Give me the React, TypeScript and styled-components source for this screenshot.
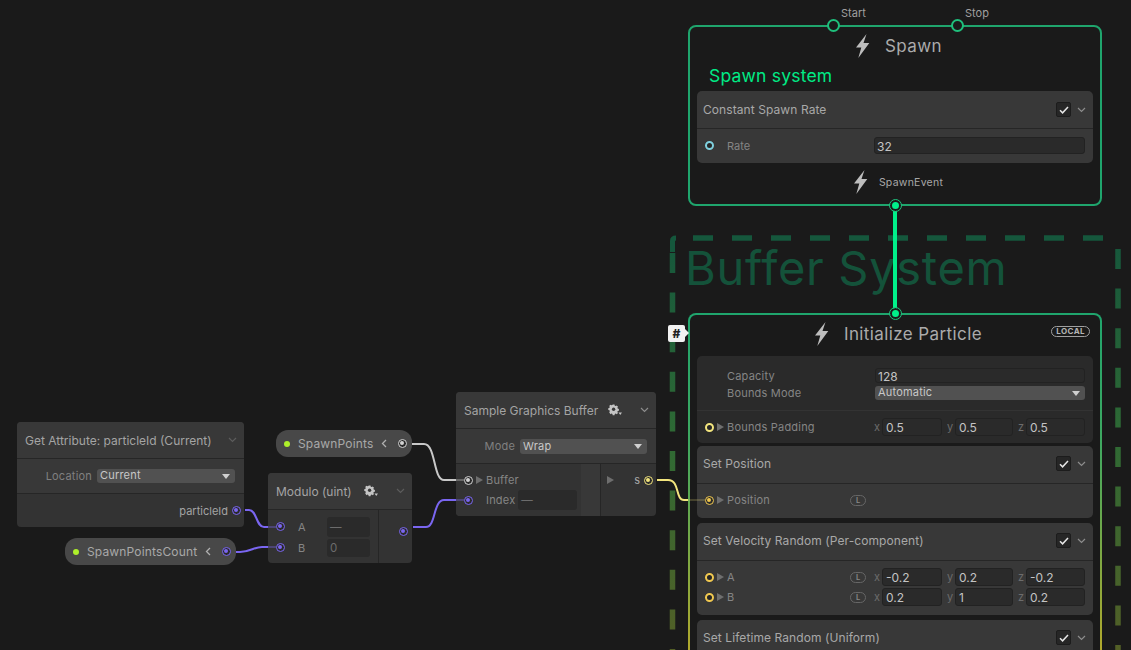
import styled, { createGlobalStyle } from "styled-components";

const GlobalStyle = createGlobalStyle`
    html, body {
        margin: 0;
        padding: 0;
        background: #1a1a1a;
    }
    body {
        font-family: "Inter", "Liberation Sans", sans-serif;
        font-size: 11px;
        color: #a6a6a6;
    }
`;

const PURPLE = "#7a66f0";
const WHITE = "#d2d2d2";
const YELLOW = "#f3e57e";
const ORANGE = "#f0c850";
const CYAN = "#7fd0de";

function Bolt() {
    return (
        <BoltSvg viewBox="0 0 14 24">
            <path d="M11 0 L0.5 13.5 L5.8 13.5 L2.8 24 L13.8 9 L8 9 Z" fill="#bdbdbd" />
        </BoltSvg>
    );
}

function Gear({ gap }: { gap: number }) {
    return (
        <GearBox $gap={gap}>
            <svg width="14" height="12" viewBox="0 0 14 12">
                <path
                    d="M4 0.5h2l.3 1.3 1 .4 1.1-.7 1.4 1.4-.7 1.1.4 1 1.3.3v2l-1.3.3-.4 1 .7 1.1-1.4 1.4-1.1-.7-1 .4-.3 1.3H4l-.3-1.3-1-.4-1.1.7L.2 8.9l.7-1.1-.4-1L-.8 6.500V4.500l1.300-.3.4-1-.7-1.100 1.400-1.400 1.100.7 1-.4Z"
                    fill="#c4c4c4"
                    transform="translate(1 0) scale(.92)"
                />
                <circle cx="5.600" cy="5.300" r="1.700" fill="#383838" />
                <path d="M10.500 8.500h3.500l-1.750 2.500Z" fill="#c4c4c4" />
            </svg>
        </GearBox>
    );
}

function Chevron({ dim }: { dim?: boolean }) {
    return (
        <svg width="9" height="6" viewBox="0 0 9 6">
            <path d="M1 1 L4.500 4.500 L8 1" fill="none" stroke={dim ? "#5c5c5c" : "#8c8c8c"} strokeWidth="1.200" />
        </svg>
    );
}

function Check() {
    return (
        <CheckBox>
            <svg width="10" height="8" viewBox="0 0 10 8">
                <path d="M1 4.200 L3.600 6.800 L9 1" fill="none" stroke="#e6e6e6" strokeWidth="1.500" />
            </svg>
        </CheckBox>
    );
}

function BlockHeader({ title, tall }: { title: string; tall?: boolean }) {
    return (
        <BlockHead $tall={tall}>
            <span>{title}</span>
            <HeadTools>
                <Check />
                <Chevron />
            </HeadTools>
        </BlockHead>
    );
}

function Vector({ x, y, z }: { x: string; y: string; z: string }) {
    return (
        <VectorRow>
            <Axis>x</Axis>
            <VectorInput $w={60}>{x}</VectorInput>
            <Axis $gap>y</Axis>
            <VectorInput $w={58}>{y}</VectorInput>
            <Axis $gap>z</Axis>
            <VectorInput $w={59}>{z}</VectorInput>
        </VectorRow>
    );
}

function ParamLabel({ color, linked, text }: { color: string; linked?: boolean; text: string }) {
    return (
        <ParamLeft>
            <Port $color={color} $linked={linked} />
            <Arrow />
            <ParamText>{text}</ParamText>
        </ParamLeft>
    );
}

function ParameterPill({ x, y, w, name, color }: { x: number; y: number; w: number; name: string; color: string }) {
    return (
        <Pill $x={x} $y={y} $w={w}>
            <Dot />
            <PillName>{name}</PillName>
            <PillArrow width="6" height="9" viewBox="0 0 6 9">
                <path d="M5 1 L1.500 4.500 L5 8" fill="none" stroke="#b0b0b0" strokeWidth="1.300" />
            </PillArrow>
            <Port $color={color} $linked />
        </Pill>
    );
}

export default function App() {
    return (
        <Canvas>
            <GlobalStyle />

            <Backdrop viewBox="0 0 1131 650" width="1131" height="650">
                <defs>
                    <linearGradient id="frame" gradientUnits="userSpaceOnUse" x1="0" y1="236" x2="0" y2="650">
                        <stop offset="0" stopColor="#15573c" />
                        <stop offset="0.5" stopColor="#2f6a34" />
                        <stop offset="1" stopColor="#535f26" />
                    </linearGradient>
                </defs>
                <path d="M672.500 252 V241 Q672.500 238 676 238" fill="none" stroke="#15573c" strokeWidth="5" />
                <line x1="693" y1="238" x2="1110" y2="238" stroke="#15573c" strokeWidth="5.500" strokeDasharray="20 19" />
                <line x1="672.500" y1="253" x2="672.500" y2="650" stroke="url(#frame)" strokeWidth="5.500" strokeDasharray="20 19.600" />
                <line x1="1118" y1="249" x2="1118" y2="650" stroke="url(#frame)" strokeWidth="5.500" strokeDasharray="20 19.600" />
            </Backdrop>

            <GroupTitle>Buffer System</GroupTitle>

            <NodeFrame>
                <TopPort $left={137}><PortLabel>Start</PortLabel></TopPort>
                <TopPort $left={261}><PortLabel>Stop</PortLabel></TopPort>
                <ContextHead>
                    <Bolt />
                    <ContextTitle>Spawn</ContextTitle>
                </ContextHead>
                <ContextLabel>Spawn system</ContextLabel>
                <Block>
                    <BlockHeader title="Constant Spawn Rate" tall />
                    <SpawnRow>
                        <SmallPort $color={CYAN} />
                        <SpawnLabel>Rate</SpawnLabel>
                        <ValueInput>32</ValueInput>
                    </SpawnRow>
                </Block>
                <EventRow>
                    <Bolt />
                    <span>SpawnEvent</span>
                </EventRow>
                <FlowPort $top={173} $left={200} />
            </NodeFrame>

            <InitFrame>
                <InitInner>
                    <InitHead>
                        <Bolt />
                        <ContextTitle>Initialize Particle</ContextTitle>
                        <LocalBadge>LOCAL</LocalBadge>
                    </InitHead>
                    <DarkBlock>
                        <SettingRows>
                            <SettingRow>
                                <SettingLabel>Capacity</SettingLabel>
                                <CapacityInput>128</CapacityInput>
                            </SettingRow>
                            <SettingRow>
                                <SettingLabel>Bounds Mode</SettingLabel>
                                <Select $w={210} $h={14}>Automatic</Select>
                            </SettingRow>
                        </SettingRows>
                        <ParamRow $h={32}>
                            <ParamLabel color={YELLOW} text="Bounds Padding" />
                            <Vector x="0.5" y="0.5" z="0.5" />
                        </ParamRow>
                    </DarkBlock>
                    <Block>
                        <BlockHeader title="Set Position" />
                        <ParamRow $h={32} $pad={2}>
                            <ParamLabel color={ORANGE} linked text="Position" />
                            <SpaceBadge>L</SpaceBadge>
                        </ParamRow>
                    </Block>
                    <Block $gap={5}>
                        <BlockHeader title="Set Velocity Random (Per-component)" />
                        <VelocityRows>
                            <ParamRow $h={20}>
                                <ParamLabel color={ORANGE} text="A" />
                                <SpaceBadge>L</SpaceBadge>
                                <Vector x="-0.2" y="0.2" z="-0.2" />
                            </ParamRow>
                            <ParamRow $h={20}>
                                <ParamLabel color={ORANGE} text="B" />
                                <SpaceBadge>L</SpaceBadge>
                                <Vector x="0.2" y="1" z="0.2" />
                            </ParamRow>
                        </VelocityRows>
                    </Block>
                    <Block $gap={5}>
                        <BlockHeader title="Set Lifetime Random (Uniform)" />
                    </Block>
                </InitInner>
                <FlowPort $top={-5} $left={202} />
            </InitFrame>

            <SystemTag>#</SystemTag>

            <Operator $x={17} $y={422} $w={227}>
                <OperatorHead>
                    <span>Get Attribute: particleId (Current)</span>
                    <HeadEnd><Chevron dim /></HeadEnd>
                </OperatorHead>
                <ModeRow>
                    <ModeLabel>Location</ModeLabel>
                    <Select $w={138} $h={14}>Current</Select>
                </ModeRow>
                <OutputRow>
                    <span>particleId</span>
                    <Port $color={PURPLE} $linked />
                </OutputRow>
            </Operator>

            <ParameterPill x={276} y={430} w={136} name="SpawnPoints" color={WHITE} />
            <ParameterPill x={65} y={538} w={171} name="SpawnPointsCount" color={PURPLE} />

            <Operator $x={268} $y={473} $w={144}>
                <OperatorHead>
                    <span>Modulo (uint)</span>
                    <Gear gap={12} />
                    <HeadEnd><Chevron dim /></HeadEnd>
                </OperatorHead>
                <SplitBody>
                    <InputsColumn>
                        <InputLine>
                            <Port $color={PURPLE} $linked />
                            <InputName>A</InputName>
                            <DarkField>—</DarkField>
                        </InputLine>
                        <InputLine>
                            <Port $color={PURPLE} $linked />
                            <InputName>B</InputName>
                            <DarkField $short>0</DarkField>
                        </InputLine>
                    </InputsColumn>
                    <OutputsColumn $w={34}>
                        <Port $color={PURPLE} $linked />
                    </OutputsColumn>
                </SplitBody>
            </Operator>

            <Operator $x={456} $y={392} $w={200}>
                <OperatorHead>
                    <span>Sample Graphics Buffer</span>
                    <Gear gap={10} />
                    <HeadEnd><Chevron /></HeadEnd>
                </OperatorHead>
                <ModeRow>
                    <ModeLabel>Mode</ModeLabel>
                    <Select $w={127} $h={15}>Wrap</Select>
                </ModeRow>
                <SplitBody $h={52}>
                    <SampleInputs>
                        <SampleLine>
                            <Port $color={WHITE} $linked />
                            <Arrow />
                            <SampleName>Buffer</SampleName>
                        </SampleLine>
                        <SampleLine>
                            <Port $color={PURPLE} $linked />
                            <ArrowGap />
                            <SampleName>Index</SampleName>
                            <IndexField>—</IndexField>
                        </SampleLine>
                    </SampleInputs>
                    <SampleOutput>
                        <Arrow />
                        <OutName>s</OutName>
                        <Port $color={YELLOW} $linked />
                    </SampleOutput>
                </SplitBody>
            </Operator>

            <Wires viewBox="0 0 1131 650" width="1131" height="650">
                <path d="M245 510 H249 C257 510 256 527 264 527 H268" stroke={PURPLE} />
                <path d="M268 527 H276 M268 547 H276 M456 500 H464" stroke={PURPLE} strokeOpacity=".35" />
                <path d="M456 480 H464" stroke="#c8c8c8" strokeOpacity=".35" />
                <path d="M688 500 H705" stroke={YELLOW} strokeOpacity=".2" />
                <path d="M236 552 H240 C250 552 254 547 262 547 H268" stroke={PURPLE} />
                <path d="M413 527 H426 C436 527 433 500 444 500 H456" stroke={PURPLE} />
                <path d="M412 444 H424 C436 444 433 480 444 480 H456" stroke="#c8c8c8" />
                <path d="M657 480 H668 C680 480 675 500 684 500 H688" stroke={YELLOW} />
                <line x1="895" y1="207" x2="895" y2="311" stroke="#00f08a" strokeWidth="4" />
            </Wires>
        </Canvas>
    );
}

const Canvas = styled.div`
    position: relative;
    width: 1131px;
    height: 650px;
    overflow: hidden;
    background: #1a1a1a;
`;

const Backdrop = styled.svg`
    position: absolute;
    left: 0;
    top: 0;
`;

const Wires = styled.svg`
    position: absolute;
    left: 0;
    top: 0;
    pointer-events: none;
    path {
        fill: none;
        stroke-width: 2;
    }
`;

const GroupTitle = styled.div`
    position: absolute;
    left: 685px;
    top: 240px;
    font-size: 47px;
    line-height: 56px;
    letter-spacing: 0.7px;
    color: #14523a;
    white-space: nowrap;
`;

const BoltSvg = styled.svg`
    width: 15px;
    height: 24px;
    flex: none;
`;

const NodeFrame = styled.div`
    position: absolute;
    left: 688px;
    top: 25px;
    width: 414px;
    height: 181px;
    box-sizing: border-box;
    border: 2px solid #1fa56d;
    border-radius: 8px;
    padding: 0 7px;
    background: #1a1a1a;
`;

const TopPort = styled.div<{ $left: number }>`
    position: absolute;
    top: -8px;
    left: ${(p) => p.$left}px;
    width: 9px;
    height: 9px;
    border: 2px solid #1fbf7c;
    border-radius: 50%;
    background: #1a1a1a;
`;

const PortLabel = styled.span`
    position: absolute;
    left: 12px;
    top: -15px;
    font-size: 11px;
    line-height: 14px;
    color: #a0a0a0;
`;

const FlowPort = styled.div<{ $top: number; $left: number }>`
    position: absolute;
    left: ${(p) => p.$left}px;
    top: ${(p) => p.$top}px;
    width: 7px;
    height: 7px;
    border: 2px solid #1a1a1a;
    outline: 1.500px solid #1fbf7c;
    border-radius: 50%;
    background: #00f08a;
    z-index: 2;
`;

const ContextHead = styled.div`
    display: flex;
    justify-content: center;
    align-items: center;
    gap: 15px;
    height: 38px;
    padding-left: 7px;
`;

const ContextTitle = styled.span`
    font-size: 17px;
    line-height: 20px;
    letter-spacing: 0.4px;
    color: #ababab;
`;

const ContextLabel = styled.div`
    margin: 0 0 0 12px;
    font-size: 17.500px;
    line-height: 22px;
    letter-spacing: 0.2px;
    color: #00ea85;
    height: 26px;
`;

const Block = styled.section<{ $gap?: number }>`
    margin-top: ${(p) => p.$gap ?? 0}px;
    background: #383838;
    border-radius: 5px;
    overflow: hidden;
`;

const DarkBlock = styled.section`
    background: #2a2a2a;
    border-radius: 5px;
    margin-bottom: 3px;
`;

const BlockHead = styled.header<{ $tall?: boolean }>`
    display: flex;
    align-items: center;
    justify-content: space-between;
    height: ${(p) => (p.$tall ? 37 : 35)}px;
    padding: 0 6px ${(p) => (p.$tall ? 0 : 2)}px;
    border-bottom: 1px solid #262626;
    font-size: 12px;
    letter-spacing: 0.08px;
    color: #a8a8a8;
`;

const HeadTools = styled.div`
    display: flex;
    align-items: center;
    gap: 6px;
    padding-right: 1px;
`;

const CheckBox = styled.div`
    display: flex;
    align-items: center;
    justify-content: center;
    width: 13px;
    height: 13px;
    background: #262626;
    border: 1px solid #1c1c1c;
    border-radius: 2px;
`;

const SpawnRow = styled.div`
    display: flex;
    align-items: center;
    height: 33px;
    padding: 0 8px 1px 8px;
`;

const SmallPort = styled.span<{ $color: string }>`
    width: 5px;
    height: 5px;
    border: 2px solid ${(p) => p.$color};
    border-radius: 50%;
    background: #262626;
`;

const SpawnLabel = styled.span`
    margin-left: 13px;
    font-size: 11px;
    color: #858585;
`;

const ValueInput = styled.div`
    margin-left: auto;
    width: 211px;
    height: 17px;
    box-sizing: border-box;
    padding-left: 2px;
    background: #2a2a2a;
    border: 1px solid #222;
    border-radius: 3px;
    font-size: 12px;
    line-height: 17px;
    color: #c4c4c4;
`;

const EventRow = styled.div`
    display: flex;
    align-items: center;
    justify-content: center;
    gap: 11px;
    height: 38px;
    padding: 0 0 0 6px;
    font-size: 10.500px;
    letter-spacing: 0.25px;
    color: #a8a8a8;
`;

const InitFrame = styled.div`
    position: absolute;
    left: 688px;
    top: 313px;
    width: 414px;
    height: 440px;
    box-sizing: border-box;
    padding: 2px;
    border-radius: 8px;
    background: linear-gradient(180deg, #1fa56d 0, #3fa860 130px, #b0a82c 337px);
`;

const InitInner = styled.div`
    height: 100%;
    box-sizing: border-box;
    padding: 0 7px;
    background: #1a1a1a;
    border-radius: 6px;
`;

const InitHead = styled.div`
    position: relative;
    display: flex;
    justify-content: center;
    align-items: center;
    gap: 15px;
    height: 37px;
    padding: 0 0 4px 6px;
`;

const LocalBadge = styled.span`
    position: absolute;
    right: 3px;
    top: 11px;
    height: 9px;
    padding: 0 4px;
    border: 1px solid #a0a0a0;
    border-radius: 6px;
    font-size: 8px;
    line-height: 9px;
    font-weight: 700;
    letter-spacing: 0.4px;
    color: #b4b4b4;
`;

const SystemTag = styled.div`
    position: absolute;
    left: 668px;
    top: 325px;
    width: 17px;
    height: 17px;
    background: #f2f2f2;
    border-radius: 2px;
    color: #222;
    font-size: 12px;
    font-weight: 800;
    line-height: 17px;
    text-align: center;
    &::after {
        content: "";
        position: absolute;
        left: 17px;
        top: 4px;
        border-left: 4px solid #f2f2f2;
        border-top: 4px solid transparent;
        border-bottom: 4px solid transparent;
    }
`;

const SettingRows = styled.div`
    display: flex;
    flex-direction: column;
    gap: 3px;
    padding: 12px 8px 10px 30px;
    border-bottom: 1px solid #333;
`;

const SettingRow = styled.div`
    display: flex;
    align-items: center;
    justify-content: space-between;
`;

const SettingLabel = styled.span`
    font-size: 11px;
    letter-spacing: 0.2px;
    color: #858585;
`;

const CapacityInput = styled(ValueInput)`
    width: 210px;
    height: 15px;
    line-height: 16px;
`;

const Select = styled.div<{ $w: number; $h: number }>`
    position: relative;
    width: ${(p) => p.$w}px;
    height: ${(p) => p.$h}px;
    box-sizing: border-box;
    padding-left: 3px;
    background: #515151;
    border-radius: 3px;
    font-size: 11px;
    line-height: ${(p) => p.$h - 1}px;
    letter-spacing: 0.2px;
    color: #c8c8c8;
    &::after {
        content: "";
        position: absolute;
        right: 5px;
        top: ${(p) => (p.$h - 5) / 2}px;
        border-top: 5px solid #d0d0d0;
        border-left: 4px solid transparent;
        border-right: 4px solid transparent;
    }
`;

const ParamRow = styled.div<{ $h: number; $pad?: number }>`
    position: relative;
    display: flex;
    align-items: center;
    height: ${(p) => p.$h}px;
    padding: 0 8px ${(p) => p.$pad ?? 0}px;
`;

const ParamLeft = styled.div`
    display: flex;
    align-items: center;
    width: 153px;
`;

const ParamText = styled.span`
    margin-left: 3px;
    font-size: 11px;
    letter-spacing: 0.2px;
    color: #858585;
`;

const Port = styled.span<{ $color: string; $linked?: boolean }>`
    position: relative;
    flex: none;
    box-sizing: border-box;
    width: 9px;
    height: 9px;
    border: ${(p) => (p.$linked ? 1.5 : 2)}px solid ${(p) => p.$color};
    border-radius: 50%;
    background: ${(p) => (p.$linked ? "#2a2a2a" : "#262626")};
    &::after {
        content: "";
        display: ${(p) => (p.$linked ? "block" : "none")};
        position: absolute;
        left: 1px;
        top: 1px;
        width: 4px;
        height: 4px;
        border-radius: 50%;
        background: ${(p) => p.$color};
    }
`;

const Arrow = styled.span`
    flex: none;
    margin-left: 3px;
    border-left: 7px solid #6e6e6e;
    border-top: 4px solid transparent;
    border-bottom: 4px solid transparent;
`;

const ArrowGap = styled.span`
    flex: none;
    width: 10px;
`;

const SpaceBadge = styled.span`
    position: absolute;
    left: 153px;
    width: 14px;
    height: 9px;
    border: 1px solid #666;
    border-radius: 6px;
    font-size: 7.500px;
    line-height: 9px;
    font-weight: 600;
    text-align: center;
    color: #888;
`;

const VectorRow = styled.div`
    display: flex;
    align-items: center;
    margin-left: auto;
    font-size: 11px;
`;

const Axis = styled.span<{ $gap?: boolean }>`
    width: 8px;
    margin-left: ${(p) => (p.$gap ? 5 : 0)}px;
    color: #6c6c6c;
    font-size: 11px;
`;

const VectorInput = styled.div<{ $w: number }>`
    width: ${(p) => p.$w}px;
    height: 18px;
    box-sizing: border-box;
    padding-left: 3px;
    background: #2a2a2a;
    border: 1px solid #222;
    border-radius: 3px;
    font-size: 12px;
    line-height: 18px;
    color: #c4c4c4;
`;

const VelocityRows = styled.div`
    padding: 6px 0 8px;
`;

const Operator = styled.div<{ $x: number; $y: number; $w: number }>`
    position: absolute;
    left: ${(p) => p.$x}px;
    top: ${(p) => p.$y}px;
    width: ${(p) => p.$w}px;
    background: #333;
    border-radius: 4px;
    overflow: hidden;
`;

const OperatorHead = styled.header`
    display: flex;
    align-items: center;
    height: 36px;
    padding: 0 8px;
    background: #383838;
    border-bottom: 1px solid #262626;
    font-size: 12px;
    color: #a4a4a4;
    white-space: nowrap;
`;

const GearBox = styled.span<{ $gap: number }>`
    display: flex;
    margin-left: ${(p) => p.$gap}px;
`;

const HeadEnd = styled.span`
    display: flex;
    margin-left: auto;
    margin-right: -1px;
`;

const ModeRow = styled.div`
    display: flex;
    align-items: center;
    justify-content: flex-end;
    gap: 5px;
    height: 34px;
    padding: 0 9px;
    background: #383838;
    border-bottom: 1px solid #262626;
`;

const ModeLabel = styled.span`
    font-size: 11px;
    letter-spacing: 0.2px;
    color: #808080;
`;

const OutputRow = styled.div`
    display: flex;
    align-items: center;
    justify-content: flex-end;
    gap: 4px;
    height: 33px;
    padding: 0 3px 0 0;
    font-size: 11px;
    color: #a4a4a4;
`;

const Pill = styled.div<{ $x: number; $y: number; $w: number }>`
    position: absolute;
    left: ${(p) => p.$x}px;
    top: ${(p) => p.$y}px;
    width: ${(p) => p.$w}px;
    height: 27px;
    box-sizing: border-box;
    display: flex;
    align-items: center;
    padding: 0 5px 0 8px;
    background: #484848;
    border-radius: 12px;
`;

const Dot = styled.span`
    flex: none;
    width: 6px;
    height: 6px;
    border-radius: 50%;
    background: #aef02a;
`;

const PillName = styled.span`
    margin-left: 8px;
    font-size: 12px;
    letter-spacing: 0.15px;
    color: #a8a8a8;
`;

const PillArrow = styled.svg`
    margin: 0 11px 0 auto;
`;

const SplitBody = styled.div<{ $h?: number }>`
    display: flex;
    height: ${(p) => p.$h ?? 53}px;
`;

const InputsColumn = styled.div`
    flex: 1;
    display: flex;
    flex-direction: column;
    justify-content: center;
    gap: 2px;
    padding: 0 0 0 8px;
`;

const InputLine = styled.div`
    display: flex;
    align-items: center;
`;

const InputName = styled.span`
    width: 29px;
    margin-left: 13px;
    font-size: 11px;
    color: #858585;
`;

const DarkField = styled.div<{ $short?: boolean }>`
    width: 43px;
    height: ${(p) => (p.$short ? 18 : 20)}px;
    box-sizing: border-box;
    padding-left: 3px;
    background: #2a2a2a;
    border-radius: 3px;
    font-size: 11.500px;
    line-height: ${(p) => (p.$short ? 18 : 20)}px;
    color: #6c6c6c;
`;

const OutputsColumn = styled.div<{ $w: number }>`
    flex: none;
    width: ${(p) => p.$w}px;
    box-sizing: border-box;
    display: flex;
    align-items: center;
    justify-content: flex-end;
    padding: 0 4px 11px 0;
    border-left: 1px solid #262626;
`;

const SampleInputs = styled.div`
    flex: 1;
    padding: 6px 0 0 8px;
    background: linear-gradient(90deg, #333 86.500%, #383838 86.500%);
`;

const SampleLine = styled.div`
    display: flex;
    align-items: center;
    height: 20px;
`;

const SampleName = styled.span`
    margin-left: 3px;
    font-size: 11px;
    letter-spacing: 0.2px;
    color: #858585;
`;

const IndexField = styled(DarkField)`
    width: 59px;
    margin-left: 3px;
`;

const SampleOutput = styled.div`
    flex: none;
    width: 56px;
    box-sizing: border-box;
    display: flex;
    align-items: center;
    height: 20px;
    margin-top: 6px;
    padding: 0 3px 0 4px;
    position: relative;
    &::before {
        content: "";
        position: absolute;
        left: 0;
        top: -6px;
        height: 52px;
        border-left: 1px solid #262626;
    }
`;

const OutName = styled.span`
    margin-left: auto;
    margin-right: 4px;
    font-size: 11px;
    color: #a8a8a8;
`;
